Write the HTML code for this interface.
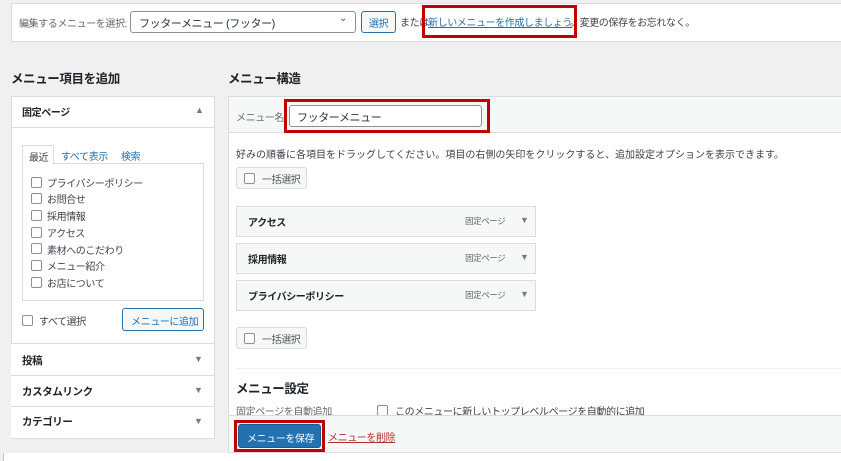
<!DOCTYPE html>
<html><head><meta charset="utf-8">
<style>
*{box-sizing:border-box;margin:0;padding:0}
body{width:841px;height:461px;background:#f0f0f1;font-family:"Liberation Sans","Noto Sans CJK JP",sans-serif;color:#3c434a;font-size:10px;letter-spacing:-0.4px;position:relative;overflow:hidden}
.a{position:absolute;white-space:nowrap}
.box{position:absolute;background:#fff;border:1px solid #dcdcde}
.cb{position:absolute;width:11px;height:11px;border:1px solid #8c8f94;border-radius:2px;background:#fff}
.btn{position:absolute;border:1px solid #c3c4c7;background:#f6f7f7;border-radius:3px;color:#50575e;white-space:nowrap}
.red{position:absolute;border:3px solid #c00000}
.item{position:absolute;left:236px;width:300px;height:31px;background:#f6f7f7;border:1px solid #dcdcde}
.item b{position:absolute;left:11px;top:7px;font-size:10px;color:#1d2327}
.item span{position:absolute;left:228px;top:8px;font-size:8.5px;color:#646970}
.item i{position:absolute;left:283px;top:8px;font-style:normal;font-size:9px;color:#787c82}
.lh{position:absolute;left:11px;width:203px;border-top:1px solid #dcdcde;background:#fff}
.lh b{position:absolute;left:11px;font-size:10.5px;color:#1d2327}
.lh i{position:absolute;left:183px;font-style:normal;font-size:9px;color:#787c82}
</style></head><body>
<div class="box" style="left:11px;top:3px;width:840px;height:39px"></div>
<div class="a" style="left:19px;top:15px;color:#646970">編集するメニューを選択:</div>
<div class="a" style="left:130px;top:11px;width:226px;height:22px;border:1px solid #8c8f94;border-radius:3px;background:#fff;font-size:11px;padding:3px 0 0 8px;color:#2c3338">フッターメニュー (フッター)<span style="position:absolute;right:8px;top:1px;font-size:10px;color:#50575e">&#8964;</span></div>
<div class="btn" style="left:361px;top:11px;width:35px;height:22px;border-color:#2271b1;color:#2271b1;padding:3px 0 0 7px">選択</div>
<div class="a" style="left:400px;top:14px;color:#3c434a">または</div>
<div class="a" style="left:428px;top:14px;color:#2271b1;text-decoration:underline">新しいメニューを作成しましょう</div>
<div class="a" style="left:570px;top:14px">。変更の保存をお忘れなく。</div>
<div class="red" style="left:422px;top:5px;width:155px;height:33px"></div>

<div class="a" style="left:11px;top:68px;font-size:12.5px;font-weight:bold;color:#1d2327">メニュー項目を追加</div>
<div class="a" style="left:228px;top:68px;font-size:12.5px;font-weight:bold;color:#1d2327">メニュー構造</div>

<!-- left panel -->
<div class="box" style="left:11px;top:96px;width:204px;height:343px"></div>
<div class="a" style="left:22px;top:104px;font-weight:bold;color:#1d2327">固定ページ</div>
<div class="a" style="left:195px;top:105px;font-size:9px;color:#787c82">▲</div>
<div class="a" style="left:12px;top:127px;width:202px;border-top:1px solid #dcdcde"></div>
<div class="a" style="left:22px;top:145px;width:32px;height:19px;border:1px solid #dcdcde;border-bottom:none;background:#fff;padding:3px 0 0 6px;z-index:2">最近</div>
<div class="a" style="left:61px;top:148px;color:#2271b1">すべて表示</div>
<div class="a" style="left:121px;top:148px;color:#2271b1">検索</div>
<div class="a" style="left:22px;top:163px;width:182px;height:138px;border:1px solid #dcdcde;background:#fff"></div>
<div class="cb" style="left:31px;top:177px"></div><div class="a" style="left:47px;top:175px">プライバシーポリシー</div>
<div class="cb" style="left:31px;top:193px"></div><div class="a" style="left:47px;top:191px">お問合せ</div>
<div class="cb" style="left:31px;top:210px"></div><div class="a" style="left:47px;top:208px">採用情報</div>
<div class="cb" style="left:31px;top:227px"></div><div class="a" style="left:47px;top:225px">アクセス</div>
<div class="cb" style="left:31px;top:243px"></div><div class="a" style="left:47px;top:242px">素材へのこだわり</div>
<div class="cb" style="left:31px;top:260px"></div><div class="a" style="left:47px;top:258px">メニュー紹介</div>
<div class="cb" style="left:31px;top:277px"></div><div class="a" style="left:47px;top:275px">お店について</div>
<div class="cb" style="left:22px;top:315px"></div><div class="a" style="left:39px;top:313px">すべて選択</div>
<div class="btn" style="left:122px;top:308px;width:82px;height:23px;border-color:#2271b1;color:#2271b1;background:#f6f7f7;padding:4px 0 0 8px">メニューに追加</div>
<div class="lh" style="top:343px;height:33px"><b style="top:9px">投稿</b><i style="top:10px">▼</i></div>
<div class="lh" style="top:375px;height:31px"><b style="top:8px">カスタムリンク</b><i style="top:9px">▼</i></div>
<div class="lh" style="top:406px;height:32px"><b style="top:7px">カテゴリー</b><i style="top:9px">▼</i></div>

<!-- right panel -->
<div class="box" style="left:228px;top:96px;width:620px;height:357px"></div>
<div class="a" style="left:229px;top:97px;width:612px;height:36px;background:#f6f7f7;border-bottom:1px solid #dcdcde"></div>
<div class="a" style="left:236px;top:109px;color:#646970">メニュー名</div>
<div class="a" style="left:289px;top:105px;width:193px;height:22px;border:1px solid #8c8f94;border-radius:3px;background:#fff;font-size:11px;padding:3px 0 0 7px;color:#2c3338">フッターメニュー</div>
<div class="red" style="left:284px;top:99px;width:206px;height:34px"></div>
<div class="a" style="left:236px;top:146px;font-size:10px;letter-spacing:0">好みの順番に各項目をドラッグしてください。項目の右側の矢印をクリックすると、追加設定オプションを表示できます。</div>
<div class="btn" style="left:236px;top:167px;width:71px;height:22px;background:#f6f7f7;border-color:#dcdcde"></div>
<div class="cb" style="left:244px;top:173px"></div><div class="a" style="left:262px;top:171px;color:#50575e">一括選択</div>
<div class="item" style="top:206px"><b>アクセス</b><span>固定ページ</span><i>▼</i></div>
<div class="item" style="top:243px"><b>採用情報</b><span>固定ページ</span><i>▼</i></div>
<div class="item" style="top:280px"><b>プライバシーポリシー</b><span>固定ページ</span><i>▼</i></div>
<div class="btn" style="left:236px;top:327px;width:71px;height:22px;background:#f6f7f7;border-color:#dcdcde"></div>
<div class="cb" style="left:244px;top:333px"></div><div class="a" style="left:262px;top:331px;color:#50575e">一括選択</div>
<div class="a" style="left:236px;top:368px;width:610px;border-top:1px solid #f0f0f1"></div>
<div class="a" style="left:236px;top:378px;font-size:12.5px;font-weight:bold;color:#1d2327">メニュー設定</div>
<div class="a" style="left:236px;top:403px;color:#646970">固定ページを自動追加</div>
<div class="cb" style="left:377px;top:405px"></div><div class="a" style="left:395px;top:403px">このメニューに新しいトップレベルページを自動的に追加</div>
<div class="a" style="left:229px;top:415px;width:612px;height:37px;background:#f6f7f7;border-top:1px solid #dcdcde"></div>
<div class="a" style="left:238px;top:424px;width:83px;height:24px;background:#2271b1;border:1px solid #135e96;border-radius:3px;color:#fff;padding:5px 0 0 8px">メニューを保存</div>
<div class="red" style="left:234px;top:420px;width:91px;height:32px"></div>
<div class="a" style="left:328px;top:429px;color:#b32d2e;text-decoration:underline">メニューを削除</div>
<div class="a" style="top:453px;width:841px;height:8px;background:#fff;border-left:1px solid #c3c4c7;left:3px"></div>
</body></html>
